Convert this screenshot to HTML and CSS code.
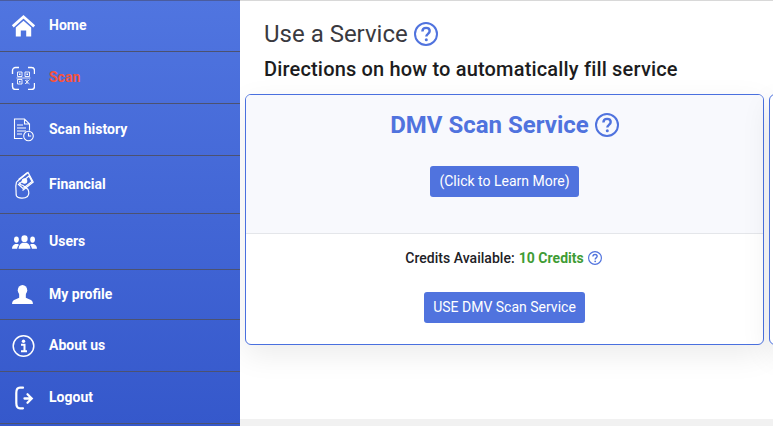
FILE: index.html
```html
<!DOCTYPE html>
<html lang="en">
<head>
    <meta charset="UTF-8">
    <meta name="viewport" content="width=device-width, initial-scale=1.0">
    <title>Use a Service</title>
    <link rel="stylesheet" href="styles.css">
</head>
<body>
    <div class="app">
        <nav class="sidebar">
            <a class="nav-item nav-home">
                <svg class="nav-icon" viewBox="0 0 24 24"><path d="M1.800 12.400 12.500 2.800 23.200 12.400" fill="none" stroke="#fff" stroke-width="2.800"/><path d="M4.800 13.500 12.500 6.800 20.200 13.500v9h-5v-6h-5.400v6H4.800z" fill="#fff"/></svg>
                <span>Home</span>
            </a>
            <a class="nav-item nav-scan active">
                <svg class="nav-icon" viewBox="0 0 24 24" fill="none" stroke="#fff"><path d="M1.500 8V4.500a3 3 0 0 1 3-3H8M17 1.500h3.500a3 3 0 0 1 3 3V8M23.500 17v3.500a3 3 0 0 1-3 3H17M8 23.500H4.500a3 3 0 0 1-3-3V17" stroke-width="1.400"/><path d="M6.500 6h4.500v4.500H6.500zM14 6h4.500v4.500H14zM6.500 13.500h4.500V18H6.500z" stroke-width=".9"/><path d="M8 7.500h1.500V9H8zM15.500 7.500H17V9h-1.500zM8 15h1.500v1.500H8z" fill="#fff" stroke="none"/><path d="M14 14l4.500 4M18.500 13.500l-4.500 4.500M16 13.500v4.500M5.500 12h14" stroke-width=".8"/></svg>
                <span>Scan</span>
            </a>
            <a class="nav-item nav-history">
                <svg class="nav-icon" viewBox="0 0 24 24" fill="none" stroke="#fff" stroke-width="1.100"><path d="M11.500 20.500H3.500V1h10l5 5v6.500M13.500 1v5h5M6 7h6M6 10h9M6 13h9M6 16h5"/><circle cx="17.500" cy="18" r="4.800"/><path d="M17.500 15.300V18h2.700"/></svg>
                <span>Scan history</span>
            </a>
            <a class="nav-item nav-financial">
                <svg class="nav-icon" viewBox="0 0 24 28" fill="none" stroke="#fff" stroke-width="1.200"><path d="M5.500 11 17 1.500l5.200 9.500-10.700 8.500"/><path d="M7.500 8.500 16.500 1.500M7.500 13.500 18 5l3 5.500-9 7z"/><circle cx="13.500" cy="10" r="2.200" fill="#fff"/><path d="M5.500 11c-.8 3-1 5.500-.5 8 .3 2-.3 4 .5 6 1.500 2.500 8 3 11 .5 1.500-2 1.500-5 .5-7l-3-2.500-2-1.500-2.500-1-1.500-2"/></svg>
                <span>Financial</span>
            </a>
            <a class="nav-item nav-users">
                <svg class="nav-icon" viewBox="0 0 26 14" fill="#fff"><ellipse cx="13" cy="3.500" rx="3.300" ry="3.500"/><path d="M6.800 14c.2-3.500 2-5.500 4.200-6.200h4c2.200.7 4 2.700 4.200 6.200z"/><ellipse cx="4.600" cy="4.500" rx="2.500" ry="3.200"/><path d="M0 14c0-2.700 1.400-4.300 3.300-5h2.800c.6.200 1 .6 1.200 1-1.200 1-1.800 2.300-2 4z"/><ellipse cx="21.400" cy="4.500" rx="2.500" ry="3.200"/><path d="M26 14c0-2.700-1.400-4.300-3.300-5h-2.800c-.6.200-1 .6-1.200 1 1.200 1 1.800 2.300 2 4z"/></svg>
                <span>Users</span>
            </a>
            <a class="nav-item nav-profile">
                <svg class="nav-icon" viewBox="0 0 22 20" fill="#fff"><ellipse cx="11" cy="5.500" rx="5" ry="5.500"/><path d="M0 20c0-2.500 1-4 4-5l3.500-1.500V9h7v4.500L18 15c3 1 4 2.500 4 5z"/></svg>
                <span>My profile</span>
            </a>
            <a class="nav-item nav-about">
                <svg class="nav-icon" viewBox="0 0 24 24" fill="none" stroke="#fff"><circle cx="12.500" cy="12" r="10.300" stroke-width="1.500"/><circle cx="12.500" cy="7.300" r="1.700" fill="#fff" stroke="none"/><path d="M10 10.800h3.500v6.400M10 17.300h6" stroke-width="2"/></svg>
                <span>About us</span>
            </a>
            <a class="nav-item nav-logout">
                <svg class="nav-icon" viewBox="0 0 24 24" fill="none" stroke="#fff" stroke-linecap="round"><path d="M12 1.700H9C6 1.700 5.300 4 5.300 7v10c0 3 .7 5.300 3.700 5.300h3" stroke-width="2.200"/><path d="M13.500 12.500h6.500M16.500 8.300l4.200 4.200-4.200 4.200" stroke-width="2.300"/></svg>
                <span>Logout</span>
            </a>
        </nav>

        <main class="content">
            <h1 class="page-title">Use a Service
                <svg class="help help-lg" viewBox="0 0 24 24"><use href="#help-icon"/></svg>
            </h1>
            <p class="page-sub">Directions on how to automatically fill service</p>

            <div class="cards">
                <section class="card">
                    <div class="card-top">
                        <h2 class="card-title">DMV Scan Service
                            <svg class="help help-md" viewBox="0 0 24 24"><use href="#help-icon"/></svg>
                        </h2>
                        <a class="btn">(Click to Learn More)</a>
                    </div>
                    <div class="card-bottom">
                        <p class="credits">Credits Available: <span class="credits-num">10 Credits</span>
                            <svg class="help help-sm" viewBox="0 0 24 24"><use href="#help-icon"/></svg>
                        </p>
                        <a class="btn">USE DMV Scan Service</a>
                    </div>
                </section>
                <section class="card"></section>
            </div>
        </main>
    </div>

    <svg class="defs" width="0" height="0">
        <symbol id="help-icon" viewBox="0 0 24 24">
            <circle cx="12" cy="12" r="11" fill="none" stroke="currentColor" stroke-width="2"/>
            <path d="M8.400 9.400c0-2.200 1.600-3.500 3.700-3.500s3.600 1.300 3.600 3.200c0 2.800-3.400 2.700-3.400 5.400" fill="none" stroke="currentColor" stroke-width="2.400"/>
            <circle cx="12.300" cy="17.700" r="1.500" fill="currentColor"/>
        </symbol>
    </svg>
</body>
</html>
```

FILE: styles.css
```css
* {
    box-sizing: border-box;
}

html, body {
    height: 100%;
}

body {
    margin: 0;
    font-family: Roboto, sans-serif;
    background: #f1f1f1;
    overflow: hidden;
}

.app {
    display: flex;
    height: 426px;
}

.sidebar {
    width: 240px;
    flex-shrink: 0;
    background: linear-gradient(180deg, #5075e0 0%, #3558cb 100%);
    box-shadow: inset 0 1px 0 #4a5c9e;
}

.nav-item {
    display: flex;
    align-items: center;
    padding-left: 11px;
    height: 52px;
    border-bottom: 1px solid #4c5270;
    color: #fff;
    font-size: 14px;
    font-weight: 700;
}

.nav-item span {
    margin-left: 14px;
    margin-bottom: 2px;
}

.nav-icon {
    width: 24px;
    height: 24px;
    flex-shrink: 0;
}

.nav-financial {
    height: 58px;
}

.nav-financial .nav-icon {
    height: 28px;
}

.nav-users {
    height: 56px;
}

.nav-users .nav-icon {
    width: 25px;
    height: 14px;
    margin-left: 1px;
    margin-right: -2px;
}

.nav-profile {
    height: 50px;
}

.nav-profile .nav-icon {
    width: 21px;
    height: 19px;
    margin-left: 1px;
    margin-right: 2px;
}

.active span {
    color: #f5533d;
}

.content {
    flex: 1;
    min-width: 0;
    height: 419px;
    background: #fff;
    box-shadow: inset 0 1px 0 #d8d8d8;
    padding: 19px 0 0 5px;
    overflow: hidden;
}

.page-title {
    margin: 0 0 0 19px;
    display: flex;
    align-items: center;
    gap: 6px;
    font-size: 24px;
    line-height: 30px;
    font-weight: 400;
    color: #3a3a3f;
}

.page-sub {
    margin: 8px 0 0 19px;
    font-size: 20px;
    letter-spacing: 0.17px;
    line-height: 24px;
    font-weight: 500;
    color: #1c1c20;
}

.help {
    color: #5073de;
    flex-shrink: 0;
}

.help-lg {
    width: 24px;
    height: 24px;
}

.help-md {
    width: 24px;
    height: 24px;
}

.help-sm {
    width: 14px;
    height: 14px;
}

.defs {
    position: absolute;
}

.cards {
    display: flex;
    gap: 5px;
    margin-top: 13px;
}

.card {
    width: 519px;
    height: 251px;
    flex-shrink: 0;
    border: 1px solid #4a70df;
    border-radius: 6px;
    background: #fff;
    box-shadow: 0 10px 30px rgba(0,0,0,0.08);
    overflow: hidden;
}

.card-top {
    display: flex;
    flex-direction: column;
    align-items: center;
    height: 139px;
    padding-top: 13px;
    background: #f8f9fd;
    border-bottom: 1px solid #e4e6ea;
}

.card-title {
    margin: 0;
    display: flex;
    align-items: center;
    gap: 6px;
    font-size: 24px;
    line-height: 34px;
    font-weight: 700;
    color: #5073de;
}

.btn {
    display: block;
    margin-top: 24px;
    padding: 0 9px;
    height: 31px;
    line-height: 31px;
    border-radius: 3px;
    background: #5073de;
    color: #fff;
    font-size: 14px;
}

.card-bottom {
    display: flex;
    flex-direction: column;
    align-items: center;
    padding-top: 15px;
}

.credits {
    margin: 0;
    padding-right: 2px;
    display: flex;
    align-items: center;
    gap: 4px;
    font-size: 14px;
    letter-spacing: 0.03px;
    line-height: 18px;
    font-weight: 500;
    color: #212126;
}

.credits-num {
    font-weight: 700;
    color: #3f9c35;
}

.card-bottom .btn {
    margin-top: 25px;
}
```
